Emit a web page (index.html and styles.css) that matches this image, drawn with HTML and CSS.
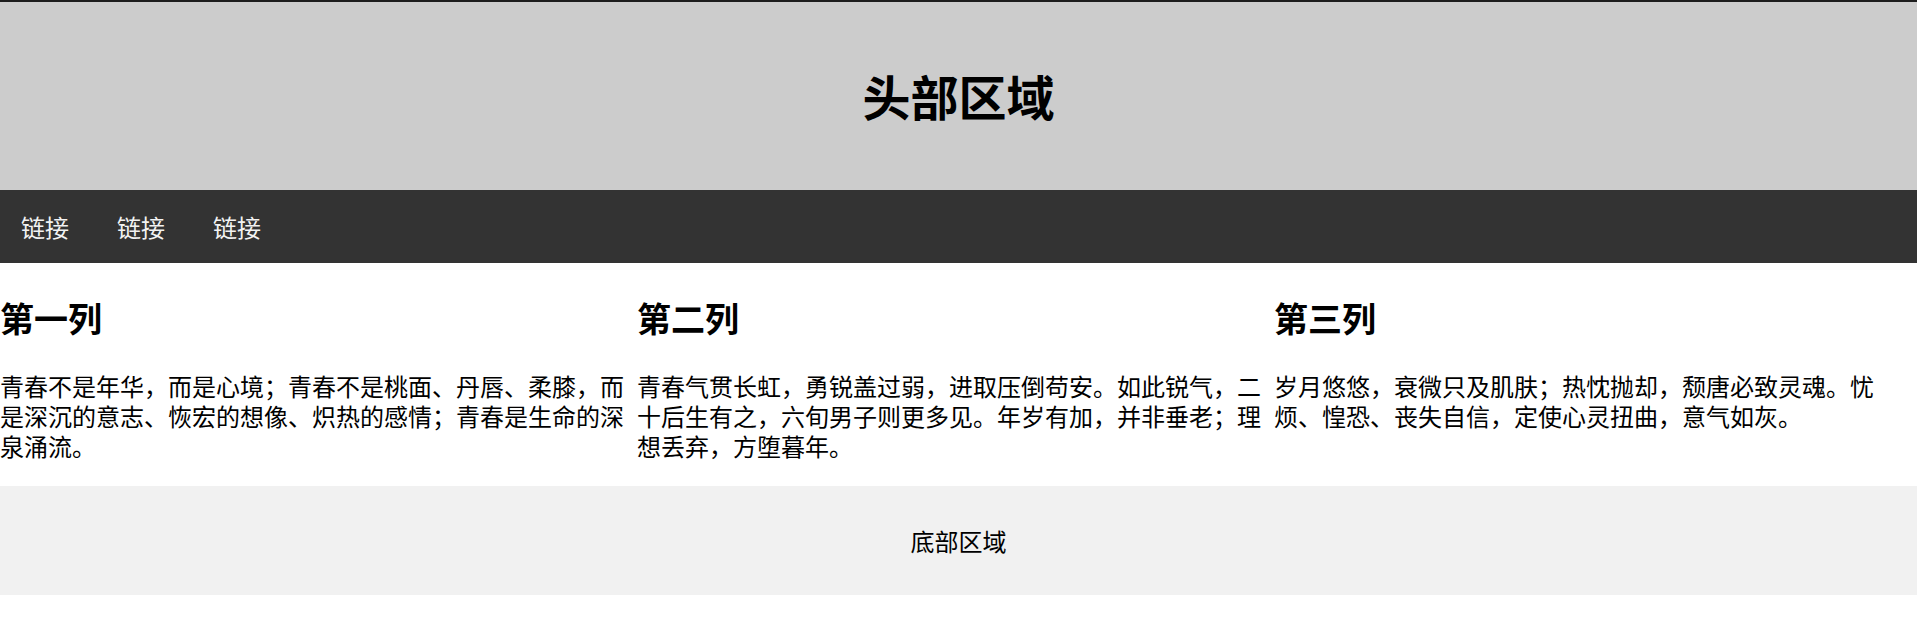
FILE: index.html
```html
<!DOCTYPE html>
<html lang="zh">
<head>
<meta charset="utf-8">
<title>页面</title>
<link rel="stylesheet" href="styles.css">
</head>
<body>
<header class="header">
  <h1 class="title">头部区域</h1>
</header>
<nav class="nav">
  <a class="nav-link" href="#">链接</a>
  <a class="nav-link" href="#">链接</a>
  <a class="nav-link" href="#">链接</a>
</nav>
<main class="columns">
  <section class="column">
    <h2 class="column-title">第一列</h2>
    <p class="column-text">青春不是年华，而是心境；青春不是桃面、丹唇、柔膝，而是深沉的意志、恢宏的想像、炽热的感情；青春是生命的深泉涌流。</p>
  </section>
  <section class="column">
    <h2 class="column-title">第二列</h2>
    <p class="column-text">青春气贯长虹，勇锐盖过弱，进取压倒苟安。如此锐气，二十后生有之，六旬男子则更多见。年岁有加，并非垂老；理想丢弃，方堕暮年。</p>
  </section>
  <section class="column">
    <h2 class="column-title">第三列</h2>
    <p class="column-text">岁月悠悠，衰微只及肌肤；热忱抛却，颓唐必致灵魂。忧烦、惶恐、丧失自信，定使心灵扭曲，意气如灰。</p>
  </section>
</main>
<footer class="footer">
  <p class="footer-text">底部区域</p>
</footer>
</body>
</html>
```

FILE: styles.css
```css
html, body {
  margin: 0;
  padding: 0;
  background: #ffffff;
}

body {
  font-family: "Noto Sans CJK SC", "Noto Sans", sans-serif;
  color: #000000;
}

.header {
  border-top: 2px solid #1c1c1c;
  height: 188px;
  background: #cccccc;
  display: flex;
  align-items: center;
  justify-content: center;
}

.title {
  margin: 0;
  font-size: 48px;
  font-weight: 700;
  line-height: 1.2;
}

.nav {
  height: 73px;
  background: #333333;
  display: flex;
  align-items: center;
  gap: 8px;
  padding-left: 1px;
}

.nav-link {
  color: #f2f2f2;
  text-decoration: none;
  font-size: 24px;
  line-height: 30px;
  padding: 0 20px;
}

.columns {
  display: grid;
  grid-template-columns: 637px 637px 1fr;
}

.column-title {
  margin: 34px 0 0;
  font-size: 34px;
  font-weight: 700;
  line-height: 41px;
}

.column-text {
  margin: 33px 0 25px;
  font-size: 24px;
  line-height: 30px;
}

.footer {
  height: 109px;
  background: #f1f1f1;
  display: flex;
  align-items: center;
  justify-content: center;
}

.footer-text {
  margin: 0;
  font-size: 24px;
  line-height: 30px;
}
```
